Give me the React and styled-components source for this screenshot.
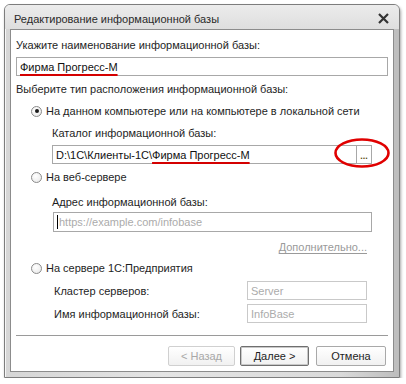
import React, { useState } from 'react';
import styled, { createGlobalStyle } from 'styled-components';

const GlobalStyle = createGlobalStyle`
  body {
    margin: 0;
    background: #ffffff;
    font-family: "Liberation Sans", Arial, sans-serif;
    font-size: 11px;
    color: #1e1e1e;
  }
`;

const Window = styled.div`
  margin: 4px 0 0 4px;
  width: 396px;
  height: 374px;
  box-sizing: border-box;
  border: 1px solid #7d7d7d;
  border-radius: 6px 6px 0 0;
  background: linear-gradient(to right, #d6d6d6, #e4e4e4 40%, #dadada 85%, #bdbdbd);
  box-shadow: 1px 2px 3px rgba(0, 0, 0, 0.35), inset 1px 1px 0 #f6f6f6;
  display: flex;
  flex-direction: column;
  padding: 0 5px 5px 5px;
`;

const TitleBar = styled.div`
  height: 25px;
  box-sizing: border-box;
  padding: 3px 10px 0 9px;
  margin: 0 -5px;
  display: flex;
  align-items: center;
  justify-content: space-between;
  color: #2a2a2a;
  background: linear-gradient(#ececec, #dedede);
  border-radius: 5px 5px 0 0;
`;

const Close = styled.svg`
  width: 11px;
  height: 11px;
`;

const Content = styled.div`
  flex: 1;
  background: #ffffff;
  border: 1px solid #8c8c8c;
  padding: 0 5px 5px 5px;
  display: flex;
  flex-direction: column;
`;

const Label = styled.div`
  height: 14px;
  line-height: 14px;
  margin-top: ${(p) => p.mt || 0}px;
  margin-left: ${(p) => p.ml || 0}px;
  white-space: nowrap;
`;

const Field = styled.div`
  position: relative;
  height: ${(p) => p.h || 19}px;
  box-sizing: border-box;
  border: 1px solid ${(p) => (p.muted ? '#c9c9c9' : '#a8a8a8')};
  margin-top: ${(p) => p.mt || 0}px;
  margin-left: ${(p) => p.ml || 0}px;
  margin-right: ${(p) => p.mr || 0}px;
  width: ${(p) => (p.w ? p.w + 'px' : 'auto')};
  display: flex;
  align-items: center;
  padding-left: 3px;
  color: #111;
  white-space: nowrap;
`;

const Placeholder = styled.span`
  color: #ababab;
`;

const Caret = styled.span`
  display: inline-block;
  width: 1px;
  height: 14px;
  background: #000;
  margin-right: 1px;
`;

const Marked = styled.span`
  text-decoration: underline;
  text-decoration-color: #d40000;
  text-decoration-thickness: 2px;
  text-underline-offset: 3px;
  text-decoration-skip-ink: none;
  padding-right: 4px;
`;

const PickButton = styled.div`
  position: absolute;
  right: 0;
  top: 0;
  bottom: 0;
  width: 15px;
  border-left: 1px solid #a8a8a8;
  display: flex;
  align-items: flex-end;
  justify-content: center;
  padding-bottom: 4px;
  box-sizing: border-box;
  font-size: 9px;
  font-weight: bold;
  color: #5a4a10;
  line-height: 6px;
`;

const RedRing = styled.svg`
  position: absolute;
  left: 281px;
  top: -8px;
  width: 56px;
  height: 30px;
  overflow: visible;
`;

const RadioRow = styled.label`
  display: flex;
  align-items: center;
  height: 14px;
  margin-top: ${(p) => p.mt || 0}px;
  margin-left: 15px;
  gap: 4px;
  cursor: default;
  white-space: nowrap;
`;

const RadioCircle = styled.span`
  width: 11px;
  height: 11px;
  box-sizing: border-box;
  border-radius: 50%;
  border: 1px solid #8a8a8a;
  background: radial-gradient(circle at 40% 35%, #ffffff, #e6e6e6);
  display: flex;
  align-items: center;
  justify-content: center;
  &::after {
    content: '';
    width: 4px;
    height: 4px;
    border-radius: 50%;
    background: ${(p) => (p.checked ? '#1a1a1a' : 'transparent')};
  }
`;

const LinkRow = styled.div`
  height: 14px;
  line-height: 14px;
  margin-top: 8px;
  display: flex;
  justify-content: flex-end;
  padding-right: 21px;
`;

const Link = styled.span`
  color: #9a9a9a;
  text-decoration: underline;
  text-underline-offset: 2px;
`;

const ServerRow = styled.div`
  display: flex;
  align-items: center;
  margin-top: ${(p) => p.mt || 0}px;
  padding-left: 38px;
  padding-right: 21px;
  height: 19px;
`;

const ServerLabel = styled.div`
  flex: 1;
  white-space: nowrap;
`;

const Separator = styled.div`
  height: 1px;
  background: #9a9a9a;
  margin-top: 12px;
`;

const Buttons = styled.div`
  display: flex;
  justify-content: flex-end;
  margin-top: 10px;
  padding-right: 2px;
`;

const Btn = styled.div`
  height: 20px;
  width: ${(p) => p.w}px;
  box-sizing: border-box;
  margin-left: ${(p) => p.ml || 0}px;
  display: flex;
  align-items: center;
  justify-content: center;
  border: 1px solid ${(p) => (p.disabled ? '#d0d0d0' : p.primary ? '#6f6f6f' : '#a9a9a9')};
  box-shadow: ${(p) => (p.primary ? 'inset 0 0 0 1px #c8c8c8' : 'none')};
  border-radius: 2px;
  background: linear-gradient(#ffffff, #f1f1f1);
  color: ${(p) => (p.disabled ? '#a8a8a8' : '#1e1e1e')};
`;

export default function App() {
  const [mode, setMode] = useState('local');

  return (
    <>
      <GlobalStyle />
      <Window>
        <TitleBar>
          <span>Редактирование информационной базы</span>
          <Close viewBox="0 0 11 11">
            <path d="M1 1 L10 10 M10 1 L1 10" stroke="#333" strokeWidth="2.2" />
          </Close>
        </TitleBar>
        <Content>
          <Label mt={8}>Укажите наименование информационной базы:</Label>
          <Field mt={5}>
            <Marked>Фирма Прогресс-М</Marked>
          </Field>
          <Label mt={6}>Выберите тип расположения информационной базы:</Label>

          <RadioRow mt={8} onClick={() => setMode('local')}>
            <RadioCircle checked={mode === 'local'} />
            На данном компьютере или на компьютере в локальной сети
          </RadioRow>
          <Label mt={8} ml={36}>Каталог информационной базы:</Label>
          <Field mt={5} ml={36} mr={16}>
            D:\1C\Клиенты-1C\<Marked>Фирма Прогресс-М</Marked>
            <PickButton>...</PickButton>
            <RedRing viewBox="0 0 56 30">
              <ellipse cx="28" cy="15" rx="26.5" ry="13.5" fill="none" stroke="#e00000" strokeWidth="2.6" />
            </RedRing>
          </Field>

          <RadioRow mt={6} onClick={() => setMode('web')}>
            <RadioCircle checked={mode === 'web'} />
            На веб-сервере
          </RadioRow>
          <Label mt={11} ml={36}>Адрес информационной базы:</Label>
          <Field mt={3} ml={37} mr={16} h={20}>
            <Caret />
            <Placeholder>https://example.com/infobase</Placeholder>
          </Field>
          <LinkRow>
            <Link>Дополнительно...</Link>
          </LinkRow>

          <RadioRow mt={7} onClick={() => setMode('server')}>
            <RadioCircle checked={mode === 'server'} />
            На сервере 1С:Предприятия
          </RadioRow>
          <ServerRow mt={6}>
            <ServerLabel>Кластер серверов:</ServerLabel>
            <Field muted w={120}>
              <Placeholder>Server</Placeholder>
            </Field>
          </ServerRow>
          <ServerRow mt={4}>
            <ServerLabel>Имя информационной базы:</ServerLabel>
            <Field muted w={120}>
              <Placeholder>InfoBase</Placeholder>
            </Field>
          </ServerRow>

          <Separator />
          <Buttons>
            <Btn w={67} disabled>&lt; Назад</Btn>
            <Btn w={69} ml={5} primary>Далее &gt;</Btn>
            <Btn w={70} ml={7}>Отмена</Btn>
          </Buttons>
        </Content>
      </Window>
    </>
  );
}
